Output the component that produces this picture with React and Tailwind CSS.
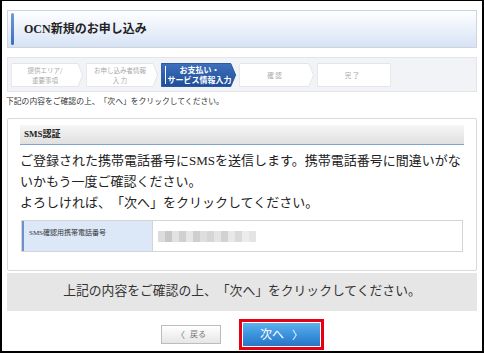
import React from 'react';

const serif = { fontFamily: '"Liberation Serif", "Noto Sans CJK JP", serif' };

const steps = [
  { lines: ['提供エリア/', '重要事項'], w: 'w-[72px]' },
  { lines: ['お申し込み者情報', '入 力'], w: 'w-[72px]' },
  { lines: ['お支払い・', 'サービス情報入力'], w: 'w-[75px]', active: true },
  { lines: ['確 認'], w: 'w-[75px]' },
  { lines: ['完 了'], w: 'w-[74px]', last: true },
];

const Step = ({ step }) => {
  const points = step.last ? '0.5,0.5 99.5,0.5 99.5,23.5 0.5,23.5' : '0.5,0.5 93,0.5 99.5,12 93,23.5 0.5,23.5';
  return (
    <div className={`relative h-[24px] ${step.w} flex items-center justify-center`}>
      <svg className="absolute inset-0 w-full h-full" viewBox="0 0 100 24" preserveAspectRatio="none">
        <defs>
          <linearGradient id="activeStep" x1="0" y1="0" x2="0" y2="1">
            <stop offset="0" stopColor="#3f70bd" />
            <stop offset="1" stopColor="#1f4d98" />
          </linearGradient>
        </defs>
        <polygon
          points={points}
          fill={step.active ? 'url(#activeStep)' : '#ffffff'}
          stroke={step.active ? '#2a5aa6' : '#e3e5ea'}
          strokeWidth="1"
          vectorEffect="non-scaling-stroke"
        />
        {step.active && <line x1="6" y1="3" x2="6" y2="21" stroke="#ffffff" strokeWidth="1" vectorEffect="non-scaling-stroke" />}
      </svg>
      <div
        className={`relative flex flex-col items-center leading-[10px] pr-[4px] ${step.active ? 'text-white font-bold text-[8px] pl-[6px]' : 'text-[#a8a8a8] text-[6.5px]'}`}
        style={{ fontFamily: '"Noto Sans CJK JP", sans-serif' }}
      >
        {step.lines.map((l) => (
          <span key={l} className="whitespace-nowrap">{l}</span>
        ))}
      </div>
    </div>
  );
};

const BlurredNumber = () => {
  const blocks = ['#dcdcdc', '#c8c8c8', '#e2e2e2', '#d0d0d0', '#e6e6e6', '#cfcfcf', '#dedede', '#d6d6d6', '#e4e4e4', '#d2d2d2', '#e8e8e8', '#dadada', '#ececec', '#e4e4e4'];
  return (
    <div className="flex blur-[0.6px]">
      {blocks.map((c, i) => (
        <div key={i} className="w-[7px] h-[11px]" style={{ backgroundColor: c }} />
      ))}
    </div>
  );
};

export default function App() {
  return (
    <div className="w-[484px] h-[353px] bg-white border-black border-t border-l-2 border-r-2 border-b-2 px-[5px] pt-[9px] overflow-hidden [text-spacing-trim:space-all]" style={serif}>
      {/* Title */}
      <div className="h-[38px] border border-[#cfd3da] bg-gradient-to-b from-white to-[#d6e3f5] flex items-center pl-[3px]">
        <div className="w-[3px] h-[32px] rounded-full bg-gradient-to-b from-[#6f9ad8] to-[#3d6cc0]" />
        <h1 className="ml-[10px] text-[12px] font-bold text-[#222]">OCN新規のお申し込み</h1>
      </div>

      {/* Stepper */}
      <div className="mt-[9px] h-[35px] border border-[#e3e5eb] bg-[#f2f3f7] flex items-center pl-[3px] gap-[3px]">
        {steps.map((s, i) => (
          <Step key={i} step={s} />
        ))}
      </div>

      <p className="mt-[5px] text-[7.8px] leading-[10px] text-[#333] -ml-[1px] whitespace-nowrap">下記の内容をご確認の上、「次へ」をクリックしてください。</p>

      {/* SMS panel */}
      <div className="mt-[11px] h-[153px] border border-[#d9d9d9] rounded-[2px] px-[12px] pt-[6px]">
        <div className="h-[20px] bg-gradient-to-b from-[#f6f6f6] to-[#e0e0e0] border-b border-[#7fa3d6] flex items-center pl-[4px]">
          <span className="text-[9px] font-bold text-[#222]">SMS認証</span>
        </div>
        <div className="mt-[5px] text-[13px] leading-[21px] text-[#222] whitespace-nowrap">
          <p>ご登録された携帯電話番号にSMSを送信します。携帯電話番号に間違いがな</p>
          <p>いかもう一度ご確認ください。</p>
          <p>よろしければ、「次へ」をクリックしてください。</p>
        </div>
        <div className="mt-[7px] ml-[1px] mr-[1px] h-[32px] border border-[#d4d4d4] flex">
          <div className="w-[130px] bg-[#dce7f8] border-l-2 border-[#6d90cf] pl-[5px] pt-[7px] text-[7px] leading-[10px] text-[#333]">
            SMS確認用携帯電話番号
          </div>
          <div className="flex-1 flex items-center pl-[5px] border-l border-[#d4d4d4]">
            <BlurredNumber />
          </div>
        </div>
      </div>

      {/* Gray notice */}
      <div className="mt-[2px] h-[38px] bg-[#e6e6e6] flex items-center justify-center">
        <span className="text-[12.8px] text-[#333] whitespace-nowrap">上記の内容をご確認の上、「次へ」をクリックしてください。</span>
      </div>

      {/* Buttons */}
      <div className="mt-[8px] flex items-center justify-center gap-[18px] pl-[1px]">
        <button className="w-[60px] h-[19px] border border-[#bcbcbc] bg-gradient-to-b from-white to-[#e6e6e6] flex items-center justify-center gap-[5px] text-[#777]">
          <span className="text-[9px]" style={{ fontFamily: '"Noto Sans CJK JP", sans-serif' }}>〈</span>
          <span className="text-[8px]">戻る</span>
        </button>
        <div className="w-[85px] h-[31px] border-[3px] border-[#e60012] p-[1px] bg-white">
          <button className="w-full h-full bg-gradient-to-b from-[#5fb1ea] via-[#3b93de] to-[#2a74c6] flex items-center justify-center gap-[8px] text-white">
            <span className="text-[12px]">次へ</span>
            <span className="text-[11px]" style={{ fontFamily: '"Noto Sans CJK JP", sans-serif' }}>〉</span>
          </button>
        </div>
      </div>
    </div>
  );
}
